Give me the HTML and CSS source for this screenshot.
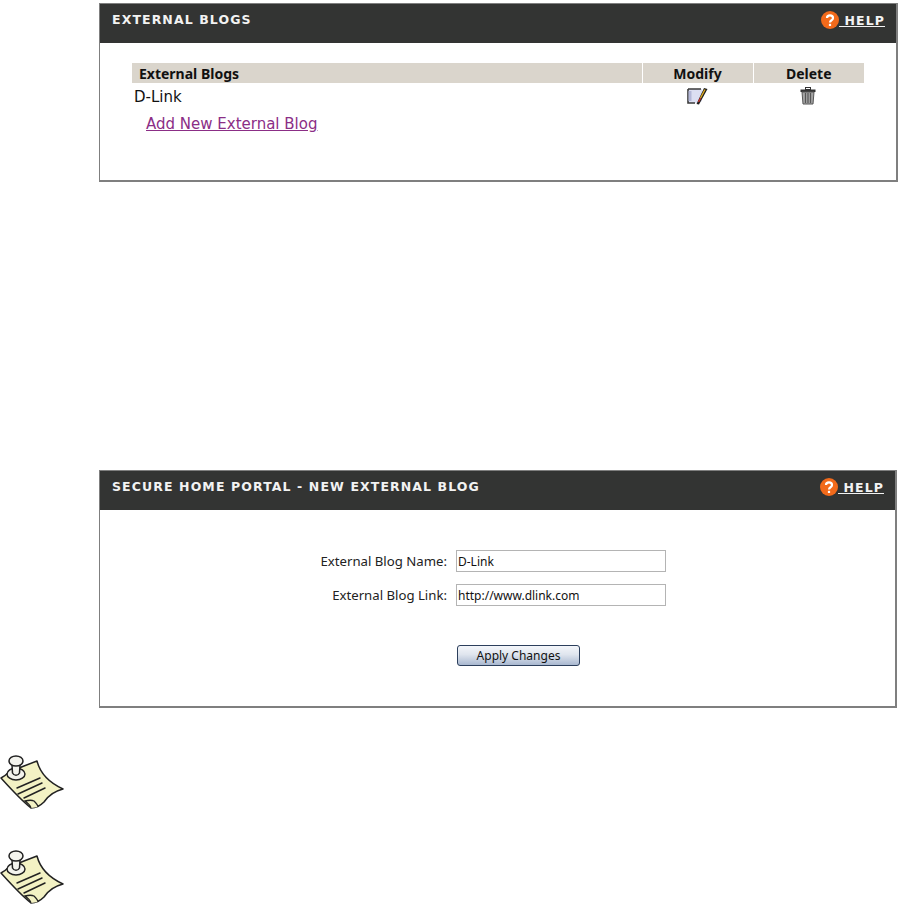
FILE: index.html
```html
<!DOCTYPE html>
<html lang="en">
  <head>
    <meta charset="UTF-8" />
    <title>External Blogs</title>
    <link rel="stylesheet" href="styles.css">
  </head>
  <body>
    <svg class="defs" width="0" height="0">
      <symbol id="note" viewBox="0 0 64 57">
        <path d="M24 13 L37 8 C40 20 50 30 63 36 C55 38 48 43 44 49 C40 53 35 55 31 55 C21 47 10 35 1 25 C5 23 7 21 9 19 Z" fill="#f3f2c4" stroke="#222" stroke-width="1.500" stroke-linejoin="round" />
        <path d="M31 55 C30 52 28 50 25 48 C29 47 32 47 34 48 C36 50 38 52 38 54" fill="#f3f2c4" stroke="#222" stroke-width="1.300" />
        <path d="M17 35 L40 25 M18 41 L42 30 M24 45 L45 35" fill="none" stroke="#222" stroke-width="1.500" stroke-linecap="round" />
        <ellipse cx="16" cy="21" rx="9" ry="6" fill="#f4f4ee" stroke="#222" stroke-width="1.500" />
        <path d="M12 12 L12.500 20 C14 23 18 23 19.500 20 L20 12" fill="#f4f4ee" stroke="#222" stroke-width="1.500" />
        <ellipse cx="16" cy="8" rx="7" ry="5" fill="#f4f4ee" stroke="#222" stroke-width="1.500" />
      </symbol>
      <symbol id="help" viewBox="0 0 18 18">
        <circle cx="9" cy="9" r="9" fill="#f26a1b" />
        <path d="M6 7 C6 3.500 12 3.500 12 7 C12 9.500 9 9 9 11.500" fill="none" stroke="#fff" stroke-width="2.200" />
        <rect x="7.900" y="12.800" width="2.200" height="2.200" fill="#fff" />
      </symbol>
    </svg>

    <section class="panel panel-blogs">
      <header class="panel-head">
        <h2>EXTERNAL BLOGS</h2>
        <a class="help" href="#"><svg class="help-icon"><use href="#help" /></svg><span>&nbsp;HELP</span></a>
      </header>
      <div class="blogs-body">
        <table class="blogs">
          <tr>
            <th class="col-name">External Blogs</th>
            <th class="col-modify">Modify</th>
            <th class="col-delete">Delete</th>
          </tr>
          <tr>
            <td class="blog-name">D-Link</td>
            <td class="icon-cell">
              <svg class="icon" width="21" height="18" viewBox="0 0 21 18">
                <path d="M1 2 H15 V14 L12 16 H1 Z" fill="#dcdff2" />
                <path d="M1 2 V16 H8 M1 2 H14" fill="none" stroke="#3a3a3a" stroke-width="1.600" />
                <path d="M3 4 V14" stroke="#b4b8d8" stroke-width="3" />
                <path d="M17 1 L20.500 2 L12 17.500 L9.500 17 Z" fill="#1c1c1c" />
                <path d="M18 2.500 L13.500 11" stroke="#e0ac20" stroke-width="1.400" />
                <path d="M13.500 11 L11.500 15" stroke="#c8352b" stroke-width="1.600" />
              </svg>
            </td>
            <td class="icon-cell">
              <svg class="icon icon-trash" width="16" height="18" viewBox="0 0 16 18">
                <rect x="5.500" y="0.500" width="5" height="2" fill="none" stroke="#333" />
                <rect x="0.500" y="2.500" width="15" height="2.500" fill="#333" />
                <path d="M2 5 H14 L13 17 H3 Z" fill="#a5a5a5" stroke="#555" />
                <path d="M5.500 6 V16 M8 6 V16 M10.500 6 V16" stroke="#555" stroke-width="1.200" />
              </svg>
            </td>
          </tr>
        </table>
        <a class="add-link" href="#">Add New External Blog</a>
      </div>
    </section>

    <section class="panel panel-form">
      <header class="panel-head">
        <h2>SECURE HOME PORTAL - NEW EXTERNAL BLOG</h2>
        <a class="help" href="#"><svg class="help-icon"><use href="#help" /></svg><span>&nbsp;HELP</span></a>
      </header>
      <form class="blog-form">
        <div class="form-row">
          <label for="blogname">External Blog Name:</label>
          <input id="blogname" type="text" value="D-Link" />
        </div>
        <div class="form-row">
          <label for="bloglink">External Blog Link:</label>
          <input id="bloglink" type="text" value="http://www.dlink.com" />
        </div>
        <button class="apply" type="button">Apply Changes</button>
      </form>
    </section>

    <div class="notes">
      <svg class="note"><use href="#note" /></svg>
      <svg class="note"><use href="#note" /></svg>
    </div>
  </body>
</html>
```

FILE: styles.css
```css
* {
  box-sizing: border-box;
}

body {
  margin: 0;
  padding-top: 3px;
  background-color: white;
  font-family: "DejaVu Sans", Verdana, sans-serif;
}

.defs {
  display: block;
  height: 0;
}

.panel {
  width: 799px;
  margin-left: 99px;
  border: 1px solid #7f7f7f;
  border-width: 0 2px 2px 1px;
  border-top: 1px solid #7f7f7f;
}

.panel-blogs {
  height: 179px;
}

.panel-form {
  width: 798px;
  height: 238px;
  margin-top: 288px;
}

.panel-head {
  display: flex;
  justify-content: space-between;
  align-items: flex-start;
  height: 39px;
  padding: 7px 11px 0 12px;
  background-color: #333433;
}

.panel-head h2 {
  margin: 0;
  color: #f2f2f2;
  font-size: 12.500px;
  line-height: 17px;
  font-weight: bold;
  letter-spacing: 1.100px;
}

.help {
  display: flex;
  align-items: flex-start;
  color: #f2f2f2;
  font-size: 12.500px;
  font-weight: bold;
  line-height: 17px;
  letter-spacing: 1.100px;
  text-decoration: none;
}

.help span {
  margin-top: 1px;
  text-decoration: underline;
}

.help-icon {
  width: 18px;
  height: 18px;
}

.blogs-body {
  padding: 20px 0 0 32px;
}

.blogs {
  width: 732px;
  border-collapse: collapse;
  table-layout: fixed;
  font-size: 15px;
  color: #111;
}

.blogs th {
  height: 20px;
  padding: 1px 0 0;
  background-color: #dad5cc;
  border-right: 1px solid white;
  font-family: "Noto Sans", Tahoma, sans-serif;
  font-size: 14px;
  line-height: 19px;
  text-align: center;
}

.blogs th:last-child {
  border-right: none;
}

.blogs .col-name {
  width: 510px;
  padding-left: 7px;
  text-align: left;
}

.blogs .col-modify {
  width: 111px;
}

.blog-name {
  padding: 5px 0 0 2px;
  line-height: 18px;
}

.icon-cell {
  padding: 3px 0 0;
  text-align: center;
  line-height: 0;
}

.icon-trash {
  margin-right: 1px;
}

.add-link {
  display: block;
  width: max-content;
  margin: 9px 0 0 14px;
  color: #8b2e86;
  font-size: 15px;
  line-height: 18px;
}

.blog-form {
  padding-top: 40px;
  font-family: "Noto Sans", Tahoma, sans-serif;
  font-size: 13.200px;
  color: #222;
}

.form-row {
  display: flex;
  align-items: center;
  height: 22px;
  margin-bottom: 12px;
}

.form-row label {
  width: 347px;
  text-align: right;
}

.form-row input {
  width: 210px;
  height: 22px;
  margin-left: 9px;
  padding: 0 1px;
  border: 1px solid #b4b4b4;
  background-color: white;
  color: #111;
  font: 12px "Noto Sans", Tahoma, sans-serif;
}

.apply {
  display: block;
  width: 123px;
  height: 21px;
  margin: 39px 0 0 357px;
  padding: 0;
  border: 1px solid #2c3f5c;
  border-radius: 3px;
  background: linear-gradient(#f4f6fa, #dfe5ee 45%, #a9b8d0);
  color: #111;
  font: 12px "Noto Sans", Tahoma, sans-serif;
}

.notes {
  display: flex;
  flex-direction: column;
  gap: 38px;
  margin-top: 45px;
}

.note {
  display: block;
  width: 64px;
  height: 57px;
}
```
